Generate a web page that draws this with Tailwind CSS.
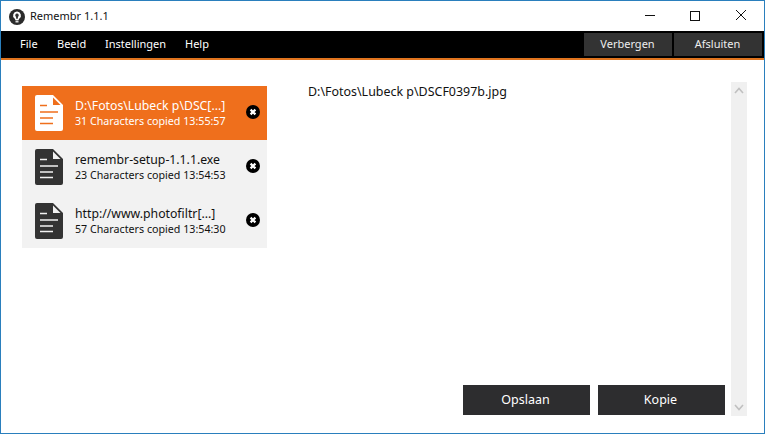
<!DOCTYPE html>
<html>
<head>
<meta charset="utf-8">
<script src="https://cdn.jsdelivr.net/npm/@tailwindcss/browser@4"></script>
</head>
<body class="m-0">
<div class="w-[765px] h-[434px] flex flex-col bg-white border border-[#2a7fbd] overflow-hidden font-['Noto_Sans',sans-serif] text-[11px] text-[#111]">
  <div class="h-[30px] shrink-0 flex items-center">
    <svg class="ml-[8px] mt-[1px] w-[16px] h-[16px]" viewBox="0 0 16 16"><circle cx="8" cy="8" r="8" fill="#2b2b2b"/><path d="M8 2.500a3.900 3.900 0 0 0-2.400 7c.5.500.7 1 .7 1.500h3.400c0-.5.200-1 .7-1.500A3.900 3.900 0 0 0 8 2.500z" fill="#fff"/><rect x="6.500" y="11.500" width="3" height="2" fill="#ddd"/><path d="M8 4.500a1.800 1.800 0 0 0-1.100 3.200l.6 2.300h1l.6-2.300A1.800 1.800 0 0 0 8 4.500z" fill="#333"/></svg>
    <span class="ml-[5px] text-[11px]">Remembr 1.1.1</span>
    <div class="ml-auto flex items-center h-full">
      <svg class="w-[46px] h-[30px]" viewBox="0 0 46 30"><path d="M19 14.500h10" stroke="#111" stroke-width="1"/></svg>
      <svg class="w-[46px] h-[30px]" viewBox="0 0 46 30"><rect x="18.500" y="10.500" width="9" height="9" fill="none" stroke="#111"/></svg>
      <svg class="w-[46px] h-[30px]" viewBox="0 0 46 30"><path d="M18 9l10 10M28 9l-10 10" stroke="#111" stroke-width="1"/></svg>
    </div>
  </div>
  <div class="h-[27px] shrink-0 bg-black flex items-center text-white">
    <div class="flex pl-[19px]">
      <span class="w-[37px]">File</span><span class="w-[48px]">Beeld</span><span class="w-[80px]">Instellingen</span><span>Help</span>
    </div>
    <div class="ml-auto flex gap-[2px] h-[23px] mr-[2px]">
      <div class="w-[88px] pr-[1px] bg-[#333] flex items-center justify-center text-[#eee]">Verbergen</div>
      <div class="w-[88px] pr-[1px] bg-[#333] flex items-center justify-center text-[#eee]">Afsluiten</div>
    </div>
  </div>
  <div class="h-[2px] shrink-0 bg-[#e0741e]"></div>
  <div class="flex-1 flex min-h-0 pt-[22px] pb-[17px] pl-[21px]">
    <div class="w-[245px] pt-[4px] shrink-0">
      <div class="h-[54px] bg-[#ef6f1c] text-white flex items-center">
        <svg class="ml-[13px] w-[28px] h-[36px] shrink-0" viewBox="0 0 28 36"><path d="M2 0h16l10 10v24a2 2 0 0 1-2 2H2a2 2 0 0 1-2-2V2a2 2 0 0 1 2-2z" fill="#fff"/><path d="M18 2.500l7.500 7.500h-7.500z" fill="#ef6f1c"/><path d="M5 10.500h7M5 17h18M5 23h13M5 28.500h13" stroke="#ef6f1c" stroke-width="1.500"/></svg>
        <div class="ml-[12px] w-[171px] leading-[15px]"><div class="text-[12.25px] leading-[16px]">D:\Fotos\Lubeck p\DSC[...]</div><div class="text-[10.7px] whitespace-nowrap">31 Characters copied 13:55:57</div></div>
        <svg class="w-[14px] h-[14px] shrink-0 -mt-[2px]" viewBox="0 0 14 14"><circle cx="7" cy="7" r="7" fill="#000"/><path d="M4.600 4.600l4.800 4.800M9.400 4.600l-4.800 4.800" stroke="#fff" stroke-width="2.200"/></svg>
      </div>
      <div class="h-[54px] bg-[#f2f2f2] flex items-center">
        <svg class="ml-[13px] w-[28px] h-[36px] shrink-0" viewBox="0 0 28 36"><path d="M2 0h16l10 10v24a2 2 0 0 1-2 2H2a2 2 0 0 1-2-2V2a2 2 0 0 1 2-2z" fill="#333"/><path d="M18 2.500l7.500 7.500h-7.500z" fill="#f2f2f2"/><path d="M5 10.500h7M5 17h18M5 23h13M5 28.500h13" stroke="#f2f2f2" stroke-width="1.500"/></svg>
        <div class="ml-[12px] w-[171px] leading-[15px]"><div class="text-[12.25px] leading-[16px]">remembr-setup-1.1.1.exe</div><div class="text-[10.7px] whitespace-nowrap">23 Characters copied 13:54:53</div></div>
        <svg class="w-[14px] h-[14px] shrink-0 -mt-[2px]" viewBox="0 0 14 14"><circle cx="7" cy="7" r="7" fill="#000"/><path d="M4.600 4.600l4.800 4.800M9.400 4.600l-4.800 4.800" stroke="#fff" stroke-width="2.200"/></svg>
      </div>
      <div class="h-[54px] bg-[#f2f2f2] flex items-center">
        <svg class="ml-[13px] w-[28px] h-[36px] shrink-0" viewBox="0 0 28 36"><path d="M2 0h16l10 10v24a2 2 0 0 1-2 2H2a2 2 0 0 1-2-2V2a2 2 0 0 1 2-2z" fill="#333"/><path d="M18 2.500l7.500 7.500h-7.500z" fill="#f2f2f2"/><path d="M5 10.500h7M5 17h18M5 23h13M5 28.500h13" stroke="#f2f2f2" stroke-width="1.500"/></svg>
        <div class="ml-[12px] w-[171px] leading-[15px]"><div class="text-[12.25px] leading-[16px]">http://www.photofiltr[...]</div><div class="text-[10.7px] whitespace-nowrap">57 Characters copied 13:54:30</div></div>
        <svg class="w-[14px] h-[14px] shrink-0 -mt-[2px]" viewBox="0 0 14 14"><circle cx="7" cy="7" r="7" fill="#000"/><path d="M4.600 4.600l4.800 4.800M9.400 4.600l-4.800 4.800" stroke="#fff" stroke-width="2.200"/></svg>
      </div>
    </div>
    <div class="flex-1 flex flex-col pl-[41px] pr-[6px] pb-[1px] min-w-0">
      <div class="pt-[1px] leading-[18px] text-[12.45px]">D:\Fotos\Lubeck p\DSCF0397b.jpg</div>
      <div class="mt-auto flex gap-[8px] justify-end">
        <div class="w-[127px] h-[30px] pt-[1px] pr-[2px] bg-[#2d2d2f] text-white text-[12.5px] flex items-center justify-center">Opslaan</div>
        <div class="w-[127px] h-[30px] pt-[1px] pr-[2px] bg-[#2d2d2f] text-white text-[12.5px] flex items-center justify-center">Kopie</div>
      </div>
    </div>
    <div class="w-[16px] mr-[17px] shrink-0 bg-[#f0f0f0] flex flex-col justify-between items-center py-[5px]">
      <svg class="w-[10px] h-[7px]" viewBox="0 0 10 7"><path d="M1 6l4-4.500L9 6" fill="none" stroke="#c0c0c0" stroke-width="1.600"/></svg>
      <svg class="w-[10px] h-[7px]" viewBox="0 0 10 7"><path d="M1 1l4 4.500L9 1" fill="none" stroke="#c0c0c0" stroke-width="1.600"/></svg>
    </div>
  </div>
</div>
</body>
</html>
